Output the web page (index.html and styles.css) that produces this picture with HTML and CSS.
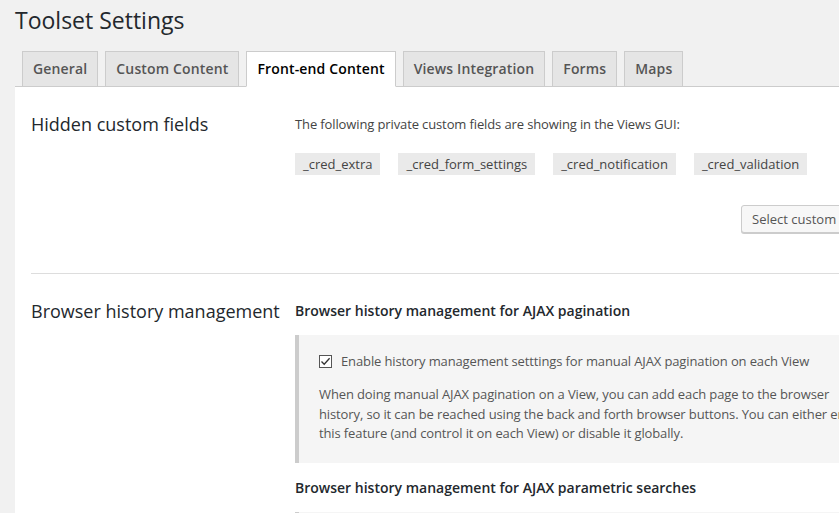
FILE: index.html
```html
<!DOCTYPE html>
<html lang="en">
<head>
    <meta charset="UTF-8">
    <meta name="viewport" content="width=device-width, initial-scale=1.0">
    <title>Toolset Settings</title>
    <link rel="stylesheet" href="styles.css">
</head>
<body>
    <div class="wrap">
        <h1>Toolset Settings</h1>

        <nav class="tab-wrapper">
            <a class="tab" href="#">General</a>
            <a class="tab" href="#">Custom Content</a>
            <a class="tab active" href="#">Front-end Content</a>
            <a class="tab" href="#">Views Integration</a>
            <a class="tab" href="#">Forms</a>
            <a class="tab" href="#">Maps</a>
        </nav>

        <div class="panel">
            <div class="section">
                <h2 class="section-title">Hidden custom fields</h2>
                <div class="section-body">
                    <p class="intro">The following private custom fields are showing in the Views GUI:</p>
                    <ul class="field-list">
                        <li>_cred_extra</li>
                        <li>_cred_form_settings</li>
                        <li>_cred_notification</li>
                        <li>_cred_validation</li>
                    </ul>
                    <div class="actions">
                        <button class="button">Select custom fields</button>
                    </div>
                </div>
            </div>

            <div class="section">
                <h2 class="section-title">Browser history management</h2>
                <div class="section-body">
                    <h3>Browser history management for AJAX pagination</h3>
                    <div class="setting-box">
                        <label class="check">
                            <span class="checkbox">
                                <svg width="11" height="11" viewBox="0 0 11 11"><path d="M1.5 5.5 L4.2 8.3 L9.6 2.2" fill="none" stroke="#333" stroke-width="1.3"/></svg>
                            </span>
                            Enable history management setttings for manual AJAX pagination on each View
                        </label>
                        <p class="help">When doing manual AJAX pagination on a View, you can add each page to the browser<br>
                        history, so it can be reached using the back and forth browser buttons. You can either enable this feature (and control it on each View) or disable it globally.</p>
                    </div>

                    <h3>Browser history management for AJAX parametric searches</h3>
                    <div class="setting-box">
                        <label class="check">
                            <span class="checkbox">
                                <svg width="11" height="11" viewBox="0 0 11 11"><path d="M1.5 5.5 L4.2 8.3 L9.6 2.2" fill="none" stroke="#333" stroke-width="1.3"/></svg>
                            </span>
                            Enable history management settings for AJAX parametric searches on each View
                        </label>
                    </div>
                </div>
            </div>
        </div>
    </div>
</body>
</html>
```

FILE: styles.css
```css
body {
    margin: 0;
    background-color: #f1f1f1;
    font-family: 'Open Sans', 'Noto Sans', sans-serif;
    font-size: 13px;
    color: #444;
    overflow: hidden;
}

.wrap {
    width: 884px;
    padding-left: 15px;
}

h1 {
    margin: 0;
    padding: 6px 0 0;
    font-size: 23px;
    font-weight: 400;
    line-height: 29px;
    color: #23282d;
}

/* Tabs */
.tab-wrapper {
    display: flex;
    gap: 7px;
    margin-top: 16px;
    padding-left: 7px;
    border-bottom: 1px solid #ccc;
}

.tab {
    display: block;
    padding: 5px 10px;
    margin-bottom: -1px;
    border: 1px solid #ccc;
    background-color: #e5e5e5;
    color: #555;
    font-size: 14px;
    font-weight: 600;
    line-height: 24px;
    letter-spacing: 0.15px;
    text-decoration: none;
}

.tab.active {
    background-color: #fff;
    border-bottom-color: #fff;
    color: #000;
}

/* Panel */
.panel {
    background-color: #fff;
    padding: 0 16px;
}

.section {
    display: flex;
    padding: 24px 0 26px;
    border-bottom: 1px solid #ddd;
}

.section:last-child {
    border-bottom: none;
}

.section-title {
    width: 264px;
    flex-shrink: 0;
    margin: 0;
    font-size: 18px;
    font-weight: 400;
    line-height: 26px;
    color: #23282d;
}

.section-body {
    flex: 1;
}

.intro {
    margin: 3px 0 19px;
    line-height: 20px;
    letter-spacing: -0.12px;
}

.field-list {
    display: flex;
    gap: 18px;
    margin: 0;
    padding: 0;
    list-style: none;
}

.field-list li {
    padding: 0 8px;
    background-color: #eaeaea;
    color: #444;
    line-height: 22px;
}

.actions {
    display: flex;
    justify-content: flex-end;
    margin-top: 30px;
    padding-bottom: 14px;
}

.button {
    height: 28px;
    padding: 0 10px;
    border: 1px solid #ccc;
    border-radius: 3px;
    background-color: #f7f7f7;
    box-shadow: 0 1px 0 #ccc;
    color: #555;
    font-family: inherit;
    font-size: 13px;
}

h3 {
    margin: 3px 0 14px;
    font-size: 14px;
    font-weight: 600;
    line-height: 20px;
    color: #23282d;
}

.setting-box {
    width: 562px;
    margin-bottom: 15px;
    padding: 16px 20px 19px;
    border-left: 4px solid #ccc;
    background-color: #f5f5f5;
}

.check {
    display: flex;
    align-items: center;
    gap: 9px;
    line-height: 20px;
    letter-spacing: -0.12px;
    color: #555;
}

.checkbox {
    display: flex;
    align-items: center;
    justify-content: center;
    width: 11px;
    height: 11px;
    border: 1px solid #555;
    background-color: #fff;
}

.help {
    margin: 14px 0 0;
    line-height: 19.5px;
    letter-spacing: -0.12px;
    color: #555;
}
```
